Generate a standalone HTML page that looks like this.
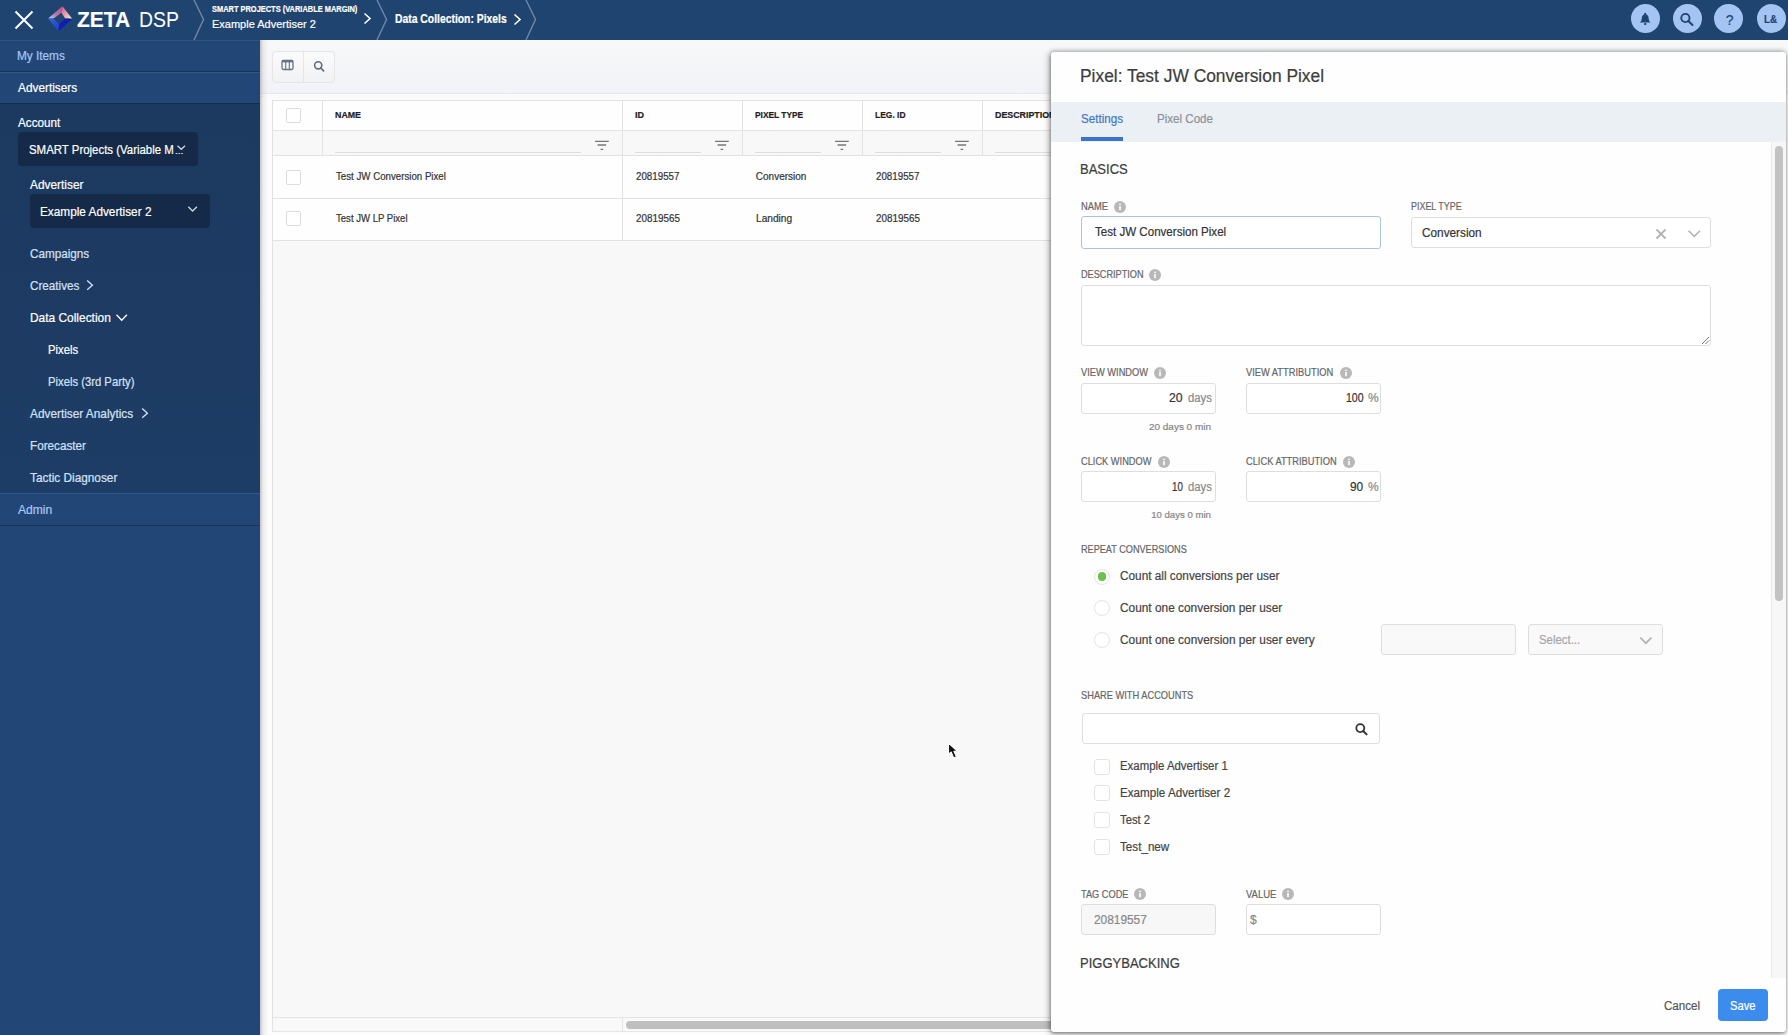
<!DOCTYPE html>
<html><head><meta charset="utf-8">
<style>
*{box-sizing:border-box;margin:0;padding:0}
html,body{width:1788px;height:1035px;overflow:hidden;font-family:"Liberation Sans",sans-serif;background:#f7f7f8;position:relative}
div{position:absolute}
.t{white-space:pre;line-height:1;transform-origin:0 0;-webkit-text-stroke:0.2px currentColor}
svg{position:absolute;overflow:visible}
</style></head><body>
<div style="left:0;top:0;width:1788px;height:40px;background:#1f4470"></div>
<svg style="left:0;top:0" width="40" height="40"><path d="M15.5 11.5 L32.5 28.5 M32.5 11.5 L15.5 28.5" stroke="#fff" stroke-width="2" fill="none"/></svg>
<svg style="left:0;top:0" width="80" height="40">
<defs>
<linearGradient id="lgTL" x1="0" y1="1" x2="1" y2="0"><stop offset="0" stop-color="#b4d2f6"/><stop offset="0.45" stop-color="#b07aaa"/><stop offset="1" stop-color="#cc4a86"/></linearGradient>
<linearGradient id="lgTR" x1="0" y1="0" x2="1" y2="1"><stop offset="0" stop-color="#c85a94"/><stop offset="0.5" stop-color="#e6a0a8"/><stop offset="1" stop-color="#f6f0c0"/></linearGradient>
<linearGradient id="lgBL" x1="0" y1="0" x2="1" y2="1"><stop offset="0" stop-color="#3a68d8"/><stop offset="1" stop-color="#1a3ac8"/></linearGradient>
</defs>
<polygon points="48.1,18.5 62.4,6.2 61.4,12.7 53.6,18.5" fill="url(#lgTL)"/>
<polygon points="62.4,6.2 72.3,18.7 65.2,18.5 61.4,12.7" fill="url(#lgTR)"/>
<polygon points="48.1,18.5 53.6,18.5 59.4,24.3 58.5,31.2" fill="url(#lgBL)"/>
<polygon points="58.5,31.2 59.4,24.3 65.2,18.5 72.3,18.7" fill="#0c1eb4"/>
</svg>
<div class=t style="left:76.5px;top:9px;font-size:22.4px;color:#fff;font-weight:700;transform:scaleX(0.9360)">ZETA</div>
<div class=t style="left:138.8px;top:9px;font-size:22.4px;color:#fff;transform:scaleX(0.8684);-webkit-text-stroke:0">DSP</div>
<svg style="left:194px;top:0" width="14" height="40"><path d="M0 0 L9.5 19.5 L0 40" stroke="#7088ab" stroke-width="1.4" fill="none"/></svg>
<svg style="left:377px;top:0" width="14" height="40"><path d="M0 0 L9.5 19.5 L0 40" stroke="#7088ab" stroke-width="1.4" fill="none"/></svg>
<svg style="left:526px;top:0" width="14" height="40"><path d="M0 0 L9.5 19.5 L0 40" stroke="#7088ab" stroke-width="1.4" fill="none"/></svg>
<div class=t style="left:211.8px;top:5px;font-size:8.8px;color:#fff;font-weight:700;transform:scaleX(0.8457)">SMART PROJECTS (VARIABLE MARGIN)</div>
<div class=t style="left:211.8px;top:18px;font-size:11.6px;color:#fff;transform:scaleX(0.9477)">Example Advertiser 2</div>
<svg style="left:360px;top:10px" width="16" height="16"><path d="M4.5 3.5 L10 8.5 L4.5 13.5" stroke="#fff" stroke-width="1.6" fill="none"/></svg>
<div class=t style="left:394.6px;top:13px;font-size:12.5px;color:#fff;font-weight:700;transform:scaleX(0.8293)">Data Collection: Pixels</div>
<svg style="left:510px;top:10.5px" width="16" height="16"><path d="M4.5 3.5 L10 8.5 L4.5 13.5" stroke="#fff" stroke-width="1.6" fill="none"/></svg>
<div style="left:1630.7px;top:4.3px;width:29px;height:29px;border-radius:50%;background:#a4c5f4"></div>
<div style="left:1672.5px;top:4.3px;width:29px;height:29px;border-radius:50%;background:#a4c5f4"></div>
<div style="left:1714.3px;top:4.3px;width:29px;height:29px;border-radius:50%;background:#a4c5f4"></div>
<div style="left:1756.5px;top:4.3px;width:29px;height:29px;border-radius:50%;background:#a4c5f4"></div>
<svg style="left:1630px;top:4px" width="30" height="30"><path d="M9.9 18.6 L20.5 18.6 Q18.7 16.9 18.6 14.2 Q18.5 10.6 15.2 10.3 Q11.9 10.6 11.8 14.2 Q11.7 16.9 9.9 18.6 Z" fill="#1f4470"/><circle cx="15.2" cy="9.9" r="1.1" fill="#1f4470"/><ellipse cx="15.2" cy="20" rx="1.3" ry="0.9" fill="#1f4470"/></svg>
<svg style="left:1672px;top:4px" width="30" height="30"><circle cx="13.4" cy="14" r="4.1" stroke="#1f4470" stroke-width="1.9" fill="none"/><path d="M16.3 17 L20.5 21" stroke="#1f4470" stroke-width="2" stroke-linecap="round"/></svg>
<div class=t style="left:1725.7px;top:13px;font-size:14px;color:#1f4470">?</div>
<div class=t style="left:1764.4px;top:14px;font-size:11.3px;color:#1f4470;font-weight:700;transform:scaleX(0.8724)">L&amp;</div>
<div style="left:0;top:40px;width:260px;height:995px;background:#224676"></div>
<div style="left:0;top:40px;width:260px;height:1px;background:#2f5689"></div>
<div style="left:0;top:71px;width:260px;height:1px;background:#173454"></div>
<div style="left:0;top:72px;width:260px;height:1px;background:#2f5a8f"></div>
<div style="left:0;top:103px;width:260px;height:391px;background:linear-gradient(180deg,#1c395f 0%,#1e3d66 100%)"></div>
<div style="left:0;top:103px;width:260px;height:1px;background:#152c4a"></div>
<div style="left:0;top:493px;width:260px;height:1px;background:#2f5a8f"></div>
<div style="left:0;top:525px;width:260px;height:1px;background:#173454"></div>
<div class=t style="left:17.2px;top:50px;font-size:12.3px;color:#a9c8f5;transform:scaleX(0.9585)">My Items</div>
<div class=t style="left:18.2px;top:82px;font-size:12.3px;color:#fff;transform:scaleX(0.9616)">Advertisers</div>
<div class=t style="left:18.2px;top:117px;font-size:12.3px;color:#fff;transform:scaleX(0.9508)">Account</div>
<div style="left:18px;top:132px;width:180px;height:34px;border-radius:4px;background:#142a48"></div>
<div class=t style="left:29.0px;top:144px;font-size:12.3px;color:#fff;transform:scaleX(0.9295)">SMART Projects (Variable M</div>
<div class=t style="left:174.5px;top:148px;font-size:8px;color:#fff;transform:scaleX(1.2412)">...</div>
<svg style="left:170px;top:140px" width="20" height="16"><path d="M7.5 5.8 L11.3 9.3 L15 5.8" stroke="#cfd8e3" stroke-width="1.3" fill="none"/></svg>
<div class=t style="left:30.2px;top:179px;font-size:12.3px;color:#fff;transform:scaleX(0.9664)">Advertiser</div>
<div style="left:30px;top:194px;width:180px;height:34px;border-radius:4px;background:#142a48"></div>
<div class=t style="left:40.4px;top:206px;font-size:12.3px;color:#fff;transform:scaleX(0.9592)">Example Advertiser 2</div>
<svg style="left:180px;top:200px" width="20" height="16"><path d="M8.3 6.8 L12.6 11 L16.9 6.8" stroke="#cfd8e3" stroke-width="1.3" fill="none"/></svg>
<div class=t style="left:30.1px;top:248px;font-size:12.1px;color:#d5e2f6;transform:scaleX(0.9669)">Campaigns</div>
<div class=t style="left:30.1px;top:280px;font-size:12.1px;color:#d5e2f6;transform:scaleX(0.9660)">Creatives</div>
<svg style="left:80px;top:275px" width="20" height="20"><path d="M7.2 5.5 L12.4 10.2 L7.2 14.8" stroke="#d5e2f6" stroke-width="1.3" fill="none"/></svg>
<div class=t style="left:30.1px;top:312px;font-size:12.1px;color:#fff;transform:scaleX(0.9854)">Data Collection</div>
<svg style="left:110px;top:308px" width="20" height="20"><path d="M6.5 6.8 L11.7 12.2 L16.9 6.8" stroke="#fff" stroke-width="1.3" fill="none"/></svg>
<div class=t style="left:48.0px;top:344px;font-size:12.1px;color:#fff;transform:scaleX(0.9313)">Pixels</div>
<div class=t style="left:48.0px;top:376px;font-size:12.1px;color:#d5e2f6;transform:scaleX(0.9319)">Pixels (3rd Party)</div>
<div class=t style="left:30.1px;top:408px;font-size:12.1px;color:#d5e2f6;transform:scaleX(0.9779)">Advertiser Analytics</div>
<svg style="left:135px;top:403px" width="20" height="20"><path d="M7.2 5.5 L12.4 10.2 L7.2 14.8" stroke="#d5e2f6" stroke-width="1.3" fill="none"/></svg>
<div class=t style="left:30.1px;top:440px;font-size:12.1px;color:#d5e2f6;transform:scaleX(0.9693)">Forecaster</div>
<div class=t style="left:30.1px;top:472px;font-size:12.1px;color:#d5e2f6;transform:scaleX(0.9768)">Tactic Diagnoser</div>
<div class=t style="left:18.0px;top:504px;font-size:12.1px;color:#a9c8f5">Admin</div>
<div style="left:260px;top:40px;width:1528px;height:995px;background:#fcfcfc"></div>
<div style="left:260px;top:40px;width:1528px;height:53px;background:linear-gradient(180deg,#f7f8fa,#f1f3f6)"></div>
<div style="left:260px;top:93px;width:1528px;height:1px;background:#e6e9ed"></div>
<div style="left:260px;top:94px;width:1528px;height:6px;background:#fbfbfb"></div>
<div style="left:260px;top:40px;width:8px;height:995px;background:linear-gradient(90deg,rgba(0,0,0,.22),rgba(0,0,0,.06) 40%,rgba(0,0,0,0))"></div>
<div style="left:272px;top:50.5px;width:63px;height:32px;border:1px solid #e3e5e8;border-radius:4px;background:linear-gradient(180deg,#fbfbfc,#f1f2f4)"></div>
<div style="left:303px;top:51px;width:1px;height:31px;background:#e3e5e8"></div>
<svg style="left:272px;top:50px" width="64" height="32"><rect x="10" y="10.5" width="11" height="9" rx="1.4" fill="none" stroke="#667184" stroke-width="1.3"/><rect x="10" y="10.2" width="11" height="2.2" fill="#667184"/><path d="M13.7 12 V19.2 M17.3 12 V19.2" stroke="#667184" stroke-width="1.1"/><circle cx="46.2" cy="15.3" r="3.6" fill="none" stroke="#5f6b7a" stroke-width="1.6"/><path d="M48.8 18 L51.6 20.8" stroke="#5f6b7a" stroke-width="1.7" stroke-linecap="round"/></svg>
<div style="left:272px;top:100px;width:790px;height:931px;background:#f8f8f8;border-left:1px solid #e2e2e2;border-top:1px solid #e2e2e2"></div>
<div style="left:273px;top:101px;width:789px;height:29px;background:#fefefe"></div>
<div style="left:273px;top:131px;width:789px;height:24px;background:#f8f8f8"></div>
<div style="left:273px;top:156px;width:789px;height:84px;background:#fefefe"></div>
<div style="left:273px;top:130px;width:789px;height:1px;background:#e2e2e2"></div>
<div style="left:273px;top:155px;width:789px;height:1px;background:#e2e2e2"></div>
<div style="left:273px;top:198px;width:789px;height:1px;background:#e2e2e2"></div>
<div style="left:273px;top:240px;width:789px;height:1px;background:#e2e2e2"></div>
<div style="left:322px;top:101px;width:1px;height:54px;background:#e2e2e2"></div>
<div style="left:622px;top:101px;width:1px;height:139px;background:#e2e2e2"></div>
<div style="left:742px;top:101px;width:1px;height:54px;background:#e2e2e2"></div>
<div style="left:862px;top:101px;width:1px;height:54px;background:#e2e2e2"></div>
<div style="left:982px;top:101px;width:1px;height:54px;background:#e2e2e2"></div>
<div style="left:285.5px;top:108px;width:15px;height:15px;border:1.5px solid #dcdcdc;border-radius:2px;background:#fff"></div>
<div style="left:285.5px;top:170px;width:15px;height:15px;border:1.5px solid #dcdcdc;border-radius:2px;background:#fff"></div>
<div style="left:285.5px;top:211px;width:15px;height:15px;border:1.5px solid #dcdcdc;border-radius:2px;background:#fff"></div>
<div class=t style="left:334.7px;top:111px;font-size:9px;color:#222;font-weight:700;transform:scaleX(0.9813)">NAME</div>
<div class=t style="left:635.1px;top:111px;font-size:9px;color:#222;font-weight:700">ID</div>
<div class=t style="left:754.9px;top:111px;font-size:9px;color:#222;font-weight:700;transform:scaleX(0.9287)">PIXEL TYPE</div>
<div class=t style="left:874.8px;top:111px;font-size:9px;color:#222;font-weight:700;transform:scaleX(0.9393)">LEG. ID</div>
<div class=t style="left:994.7px;top:111px;font-size:9px;color:#222;font-weight:700;transform:scaleX(0.9835)">DESCRIPTION</div>
<div style="left:334.7px;top:152px;width:246.1px;height:1px;background:#dedede"></div>
<svg style="left:595.2px;top:140px" width="14" height="11"><path d="M0 1.4 H13.8 M2.6 5 H11.2 M5.6 9.3 H8.2" stroke="#777" stroke-width="1.3"/></svg>
<div style="left:635px;top:152px;width:65.6px;height:1px;background:#dedede"></div>
<svg style="left:715.2px;top:140px" width="14" height="11"><path d="M0 1.4 H13.8 M2.6 5 H11.2 M5.6 9.3 H8.2" stroke="#777" stroke-width="1.3"/></svg>
<div style="left:754.9px;top:152px;width:65.7px;height:1px;background:#dedede"></div>
<svg style="left:835.2px;top:140px" width="14" height="11"><path d="M0 1.4 H13.8 M2.6 5 H11.2 M5.6 9.3 H8.2" stroke="#777" stroke-width="1.3"/></svg>
<div style="left:874.8px;top:152px;width:65.8px;height:1px;background:#dedede"></div>
<svg style="left:955.2px;top:140px" width="14" height="11"><path d="M0 1.4 H13.8 M2.6 5 H11.2 M5.6 9.3 H8.2" stroke="#777" stroke-width="1.3"/></svg>
<div style="left:994.7px;top:152px;width:65.3px;height:1px;background:#dedede"></div>
<div class=t style="left:336.0px;top:172px;font-size:10px;color:#333;transform:scaleX(0.9695)">Test JW Conversion Pixel</div>
<div class=t style="left:636.1px;top:172px;font-size:10px;color:#333;transform:scaleX(0.9771)">20819557</div>
<div class=t style="left:755.8px;top:172px;font-size:10px;color:#333">Conversion</div>
<div class=t style="left:875.7px;top:172px;font-size:10px;color:#333;transform:scaleX(0.9771)">20819557</div>
<div class=t style="left:336.0px;top:214px;font-size:10px;color:#333;transform:scaleX(0.9559)">Test JW LP Pixel</div>
<div class=t style="left:636.1px;top:214px;font-size:10px;color:#333;transform:scaleX(0.9860)">20819565</div>
<div class=t style="left:755.8px;top:214px;font-size:10px;color:#333;transform:scaleX(1.0163)">Landing</div>
<div class=t style="left:875.7px;top:214px;font-size:10px;color:#333;transform:scaleX(0.9860)">20819565</div>
<div style="left:273px;top:1017px;width:789px;height:1px;background:#e4e4e4"></div>
<div style="left:273px;top:1018px;width:789px;height:13px;background:#f9f9f9"></div>
<div style="left:622px;top:1018px;width:1px;height:13px;background:#e4e4e4"></div>
<div style="left:626px;top:1021px;width:450px;height:7.5px;border-radius:4px;background:#bfbfbf"></div>
<div style="left:272px;top:1031px;width:790px;height:1px;background:#e6e6e6"></div>
<div style="left:268px;top:1032px;width:800px;height:3px;background:#fdfdfd"></div>
<svg style="left:947.2px;top:742.3px" width="16" height="22"><path d="M1.5 1.2 L1.5 12.4 L4.2 10 L6.7 15.9 L9.4 14.8 L6.9 9.3 L10.5 9.3 Z" fill="#111" stroke="#fff" stroke-width="1.1" stroke-linejoin="round"/></svg>
<div style="left:1051px;top:52px;width:735px;height:980px;background:#fefefe;border-radius:3px;box-shadow:-2px 1px 6px rgba(0,0,0,.30), 0 2px 3px rgba(0,0,0,.25), 0 -1px 4px rgba(0,0,0,.22)"></div>
<div class=t style="left:1080.1px;top:68px;font-size:17.6px;color:#3d3d3d;transform:scaleX(0.9879)">Pixel: Test JW Conversion Pixel</div>
<div style="left:1051px;top:102px;width:735px;height:40px;background:#ebf0f5"></div>
<div class=t style="left:1081.0px;top:113px;font-size:12px;color:#3f77c8;transform:scaleX(0.9686)">Settings</div>
<div style="left:1081px;top:137px;width:42.4px;height:4.3px;background:#3874d0"></div>
<div class=t style="left:1157.4px;top:113px;font-size:12px;color:#8d9299;transform:scaleX(0.9647)">Pixel Code</div>
<div style="left:1771px;top:142px;width:15px;height:836px;background:#f7f7f8;border-left:1px solid #e9e9ea"></div>
<div style="left:1775px;top:145.5px;width:8px;height:455px;border-radius:4px;background:#c2c2c2"></div>
<div class=t style="left:1080.1px;top:163px;font-size:13.8px;color:#3d3d3d;transform:scaleX(0.9432)">BASICS</div>
<div class=t style="left:1081.1px;top:202px;font-size:10.3px;color:#666;transform:scaleX(0.9069)">NAME</div>
<svg style="left:1114.3px;top:201.4px" width="12" height="12"><circle cx="6" cy="6" r="6" fill="#b8b8b8"/><rect x="5.2" y="5" width="1.6" height="4.2" fill="#fff"/><circle cx="6" cy="3.3" r="0.9" fill="#fff"/></svg>
<div style="left:1081px;top:216.4px;width:300px;height:32.3px;border:1px solid #a9c4e0;border-radius:3px;background:#fff"></div>
<div class=t style="left:1094.5px;top:226px;font-size:12px;color:#333;transform:scaleX(0.9640)">Test JW Conversion Pixel</div>
<div class=t style="left:1411.3px;top:202px;font-size:10.3px;color:#666;transform:scaleX(0.8667)">PIXEL TYPE</div>
<div style="left:1411.3px;top:216.7px;width:299.5px;height:31.5px;border:1px solid #dedede;border-radius:3px;background:#fff"></div>
<div class=t style="left:1422.4px;top:227px;font-size:12px;color:#333;transform:scaleX(0.9829)">Conversion</div>
<svg style="left:1650px;top:224px" width="60" height="20"><path d="M6.5 5.5 L15.5 14.5 M15.5 5.5 L6.5 14.5" stroke="#b3b3b3" stroke-width="1.8"/><path d="M38.5 6.8 L44.3 12.4 L50 6.8" stroke="#b3b3b3" stroke-width="1.5" fill="none"/></svg>
<div class=t style="left:1081.1px;top:270px;font-size:10.3px;color:#666;transform:scaleX(0.8894)">DESCRIPTION</div>
<svg style="left:1149.3px;top:269.3px" width="12" height="12"><circle cx="6" cy="6" r="6" fill="#b8b8b8"/><rect x="5.2" y="5" width="1.6" height="4.2" fill="#fff"/><circle cx="6" cy="3.3" r="0.9" fill="#fff"/></svg>
<div style="left:1081px;top:284.6px;width:629.8px;height:61.4px;border:1px solid #dedede;border-radius:3px;background:#fff"></div>
<svg style="left:1700px;top:335px" width="10" height="10"><path d="M2 9 L9 2 M5.5 9 L9 5.5" stroke="#777" stroke-width="1"/></svg>
<div class=t style="left:1081.1px;top:368px;font-size:10.3px;color:#666;transform:scaleX(0.9017)">VIEW WINDOW</div>
<svg style="left:1154.4px;top:367.3px" width="12" height="12"><circle cx="6" cy="6" r="6" fill="#b8b8b8"/><rect x="5.2" y="5" width="1.6" height="4.2" fill="#fff"/><circle cx="6" cy="3.3" r="0.9" fill="#fff"/></svg>
<div style="left:1081.4px;top:382.7px;width:134.4px;height:31.7px;border:1px solid #dedede;border-radius:3px;background:#fff"></div>
<div class=t style="left:1169.1px;top:392px;font-size:12px;color:#333;transform:scaleX(1.0165)">20</div>
<div class=t style="left:1187.8px;top:392px;font-size:12px;color:#8a8a8a;transform:scaleX(0.9429)">days</div>
<div class=t style="left:1149.0px;top:422px;font-size:9.6px;color:#858585;transform:scaleX(1.0372)">20 days 0 min</div>
<div class=t style="left:1246.3px;top:368px;font-size:10.3px;color:#666;transform:scaleX(0.9035)">VIEW ATTRIBUTION</div>
<svg style="left:1340.0px;top:367.3px" width="12" height="12"><circle cx="6" cy="6" r="6" fill="#b8b8b8"/><rect x="5.2" y="5" width="1.6" height="4.2" fill="#fff"/><circle cx="6" cy="3.3" r="0.9" fill="#fff"/></svg>
<div style="left:1246.3px;top:382.7px;width:134.7px;height:31.7px;border:1px solid #dedede;border-radius:3px;background:#fff"></div>
<div class=t style="left:1345.6px;top:392px;font-size:12px;color:#333;transform:scaleX(0.8797)">100</div>
<div class=t style="left:1368.0px;top:392px;font-size:12px;color:#8a8a8a">%</div>
<div class=t style="left:1081.1px;top:457px;font-size:10.3px;color:#666;transform:scaleX(0.8989)">CLICK WINDOW</div>
<svg style="left:1158.1px;top:455.5px" width="12" height="12"><circle cx="6" cy="6" r="6" fill="#b8b8b8"/><rect x="5.2" y="5" width="1.6" height="4.2" fill="#fff"/><circle cx="6" cy="3.3" r="0.9" fill="#fff"/></svg>
<div style="left:1081.4px;top:471.3px;width:134.4px;height:31.2px;border:1px solid #dedede;border-radius:3px;background:#fff"></div>
<div class=t style="left:1171.9px;top:481px;font-size:12px;color:#333;transform:scaleX(0.8118)">10</div>
<div class=t style="left:1187.8px;top:481px;font-size:12px;color:#8a8a8a;transform:scaleX(0.9429)">days</div>
<div class=t style="left:1151.2px;top:510px;font-size:9.6px;color:#858585">10 days 0 min</div>
<div class=t style="left:1246.3px;top:457px;font-size:10.3px;color:#666;transform:scaleX(0.9013)">CLICK ATTRIBUTION</div>
<svg style="left:1343.3px;top:455.5px" width="12" height="12"><circle cx="6" cy="6" r="6" fill="#b8b8b8"/><rect x="5.2" y="5" width="1.6" height="4.2" fill="#fff"/><circle cx="6" cy="3.3" r="0.9" fill="#fff"/></svg>
<div style="left:1246.3px;top:471.3px;width:134.7px;height:31.2px;border:1px solid #dedede;border-radius:3px;background:#fff"></div>
<div class=t style="left:1350.0px;top:481px;font-size:12px;color:#333;transform:scaleX(0.9873)">90</div>
<div class=t style="left:1368.0px;top:481px;font-size:12px;color:#8a8a8a">%</div>
<div class=t style="left:1080.9px;top:545px;font-size:10.3px;color:#666;transform:scaleX(0.8869)">REPEAT CONVERSIONS</div>
<div style="left:1094px;top:568.5px;width:16px;height:16px;border-radius:50%;border:1px solid #e4e4e4;background:#fff"></div>
<div style="left:1097.8px;top:572.3px;width:8.4px;height:8.4px;border-radius:50%;background:#6cc24a"></div>
<div class=t style="left:1120.3px;top:570px;font-size:12px;color:#444;transform:scaleX(0.9834)">Count all conversions per user</div>
<div style="left:1094px;top:600.3px;width:16px;height:16px;border-radius:50%;border:1px solid #e4e4e4;background:#fff"></div>
<div class=t style="left:1120.3px;top:602px;font-size:12px;color:#444;transform:scaleX(0.9890)">Count one conversion per user</div>
<div style="left:1094px;top:632.2px;width:16px;height:16px;border-radius:50%;border:1px solid #e4e4e4;background:#fff"></div>
<div class=t style="left:1120.3px;top:634px;font-size:12px;color:#444;transform:scaleX(0.9895)">Count one conversion per user every</div>
<div style="left:1381.3px;top:623.5px;width:134.3px;height:31.9px;border:1px solid #dedede;border-radius:3px;background:#f9f9fa"></div>
<div style="left:1528.1px;top:623.5px;width:134.5px;height:31.9px;border:1px solid #dedede;border-radius:3px;background:#f9f9fa"></div>
<div class=t style="left:1539.0px;top:634px;font-size:12px;color:#a6a6a6;transform:scaleX(0.9484)">Select...</div>
<svg style="left:1636px;top:632px" width="20" height="16"><path d="M4.2 5.5 L9.9 11.2 L15.6 5.5" stroke="#b0b0b0" stroke-width="1.7" fill="none"/></svg>
<div class=t style="left:1081.1px;top:691px;font-size:10.3px;color:#666;transform:scaleX(0.9002)">SHARE WITH ACCOUNTS</div>
<div style="left:1082.4px;top:712.9px;width:297.3px;height:31.1px;border:1px solid #dedede;border-radius:3px;background:#fff"></div>
<svg style="left:1350px;top:718px" width="22" height="22"><circle cx="10.3" cy="10.1" r="4" fill="none" stroke="#333" stroke-width="1.8"/><path d="M13.2 13 L16.6 16.4" stroke="#333" stroke-width="2" stroke-linecap="round"/></svg>
<div style="left:1094.4px;top:758.5px;width:15.3px;height:16px;border:1px solid #e4e4e4;border-radius:3px;background:#fff"></div>
<div class=t style="left:1120.4px;top:760px;font-size:12px;color:#444;transform:scaleX(0.9504)">Example Advertiser 1</div>
<div style="left:1094.4px;top:785.0px;width:15.3px;height:16px;border:1px solid #e4e4e4;border-radius:3px;background:#fff"></div>
<div class=t style="left:1120.4px;top:787px;font-size:12px;color:#444;transform:scaleX(0.9714)">Example Advertiser 2</div>
<div style="left:1094.4px;top:812.3px;width:15.3px;height:16px;border:1px solid #e4e4e4;border-radius:3px;background:#fff"></div>
<div class=t style="left:1120.4px;top:814px;font-size:12px;color:#444;transform:scaleX(0.9400)">Test 2</div>
<div style="left:1094.4px;top:839.0px;width:15.3px;height:16px;border:1px solid #e4e4e4;border-radius:3px;background:#fff"></div>
<div class=t style="left:1120.4px;top:841px;font-size:12px;color:#444;transform:scaleX(0.9720)">Test_new</div>
<div class=t style="left:1081.1px;top:890px;font-size:10.3px;color:#666;transform:scaleX(0.8957)">TAG CODE</div>
<svg style="left:1134.4px;top:888.3px" width="12" height="12"><circle cx="6" cy="6" r="6" fill="#b8b8b8"/><rect x="5.2" y="5" width="1.6" height="4.2" fill="#fff"/><circle cx="6" cy="3.3" r="0.9" fill="#fff"/></svg>
<div style="left:1081px;top:904.4px;width:134.7px;height:30.9px;border:1px solid #dedede;border-radius:3px;background:#f7f7f7"></div>
<div class=t style="left:1093.6px;top:914px;font-size:12px;color:#888;transform:scaleX(0.9885)">20819557</div>
<div class=t style="left:1245.9px;top:890px;font-size:10.3px;color:#666;transform:scaleX(0.9205)">VALUE</div>
<svg style="left:1281.7px;top:888.3px" width="12" height="12"><circle cx="6" cy="6" r="6" fill="#b8b8b8"/><rect x="5.2" y="5" width="1.6" height="4.2" fill="#fff"/><circle cx="6" cy="3.3" r="0.9" fill="#fff"/></svg>
<div style="left:1246px;top:904.4px;width:134.6px;height:30.9px;border:1px solid #dedede;border-radius:3px;background:#fff"></div>
<div class=t style="left:1250.0px;top:914px;font-size:12px;color:#888">$</div>
<div class=t style="left:1080.2px;top:957px;font-size:13.8px;color:#3d3d3d;transform:scaleX(0.9436)">PIGGYBACKING</div>
<div style="left:1718.2px;top:989px;width:49.8px;height:32px;border-radius:4px;background:#3b8ced"></div>
<div class=t style="left:1730.0px;top:1000px;font-size:12px;color:#fff;transform:scaleX(0.9322)">Save</div>
<div class=t style="left:1664.0px;top:1000px;font-size:12px;color:#555;transform:scaleX(0.9649)">Cancel</div>
</body></html>
